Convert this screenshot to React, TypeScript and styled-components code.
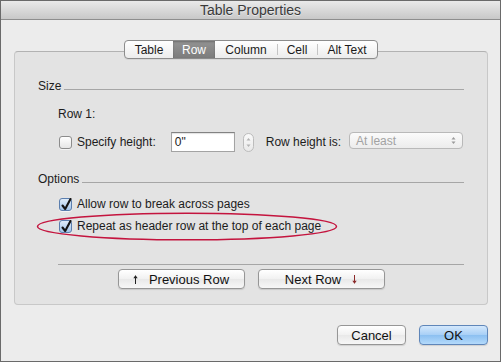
import React from "react";
import styled, { createGlobalStyle } from "styled-components";

const Global = createGlobalStyle`
  html, body { margin: 0; padding: 0; background: #ececec; }
  body {
    font-family: "Liberation Sans", Arial, sans-serif;
    font-size: 12px;
    color: #1c1c1c;
  }
  * { box-sizing: border-box; }
`;

const Window = styled.div`
  width: 501px;
  height: 362px;
  display: flex;
  flex-direction: column;
  background: #ececec;
  border: 1px solid #6a6a6a;
`;

const TitleBar = styled.div`
  height: 19px;
  flex: none;
  display: flex;
  align-items: center;
  justify-content: center;
  background: linear-gradient(#eaeaea, #c8c8c8);
  border-bottom: 1px solid #8e8e8e;
  font-size: 14px;
  color: #3a3a3a;
  text-shadow: 0 1px 0 rgba(255, 255, 255, 0.55);
`;

const Body = styled.div`
  padding: 31px 12px 0 13px;
  display: flex;
  flex-direction: column;
`;

const Panel = styled.div`
  background: #e3e3e3;
  border: 1px solid #c8c8c8;
  border-top-color: #b2b2b2;
  border-radius: 4px;
  padding: 0 23px 15px 23px;
  display: flex;
  flex-direction: column;
`;

const TabBar = styled.div`
  align-self: center;
  margin-top: -12px;
  margin-bottom: 20px;
  height: 19px;
  display: flex;
  border: 1px solid #8c8c8c;
  border-radius: 4px;
  overflow: hidden;
  background: linear-gradient(#ffffff, #ececec);
  box-shadow: 0 1px 0 rgba(0, 0, 0, 0.06);
`;

const Tab = styled.div<{ $w: number; $selected?: boolean; $divider?: boolean }>`
  position: relative;
  width: ${(p) => p.$w}px;
  display: flex;
  align-items: center;
  justify-content: center;
  font-size: 12px;
  color: ${(p) => (p.$selected ? "#ffffff" : "#1a1a1a")};
  background: ${(p) => (p.$selected ? "linear-gradient(#939393, #7c7c7c)" : "transparent")};
  box-shadow: ${(p) => (p.$selected ? "inset 0 1px 2px rgba(0,0,0,0.25)" : "none")};
  ${(p) =>
    p.$divider
      ? `&::before {
    content: "";
    position: absolute;
    left: 0;
    top: 3px;
    height: 11px;
    width: 1px;
    background: #c4c4c4;
  }`
      : ""}
`;

const SectionHeader = styled.div<{ $gap?: number }>`
  display: flex;
  height: 14px;
  line-height: 14px;
  margin-top: ${(p) => p.$gap ?? 0}px;
`;

const Rule = styled.div`
  flex: 1;
  height: 1px;
  background: #a6a6a6;
  align-self: flex-end;
  margin: 0 0 3px 3px;
`;

const Indented = styled.div`
  margin-left: 20px;
  display: flex;
  flex-direction: column;
`;

const PlainLabel = styled.div<{ $gap?: number }>`
  height: 14px;
  line-height: 14px;
  margin-top: ${(p) => p.$gap ?? 0}px;
`;

const FieldRow = styled.div<{ $gap?: number }>`
  display: flex;
  align-items: center;
  height: 20px;
  margin-top: ${(p) => p.$gap ?? 0}px;
`;

const CheckRow = styled.div<{ $gap?: number }>`
  position: relative;
  display: flex;
  align-items: center;
  height: 16px;
  margin-top: ${(p) => p.$gap ?? 0}px;
`;

const Box = styled.div<{ $checked?: boolean }>`
  position: relative;
  width: 13px;
  height: 13px;
  flex: none;
  margin: 0 5px 0 1px;
  border-radius: 3px;
  border: 1px solid ${(p) => (p.$checked ? "#5b7eae" : "#8c8c8c")};
  background: ${(p) =>
    p.$checked ? "linear-gradient(#dfecf9, #a2c4ea)" : "linear-gradient(#ffffff, #e6e6e6)"};
  box-shadow: 0 1px 0 rgba(255, 255, 255, 0.6);
  svg {
    position: absolute;
    left: 0;
    top: -3px;
    overflow: visible;
  }
`;

const TextInput = styled.div`
  width: 64px;
  height: 20px;
  margin-left: 15px;
  background: #fff;
  border: 1px solid #a3a3a3;
  border-top-color: #828282;
  box-shadow: inset 0 1px 1px rgba(0, 0, 0, 0.12);
  padding-left: 3px;
  display: flex;
  align-items: center;
  font-size: 12px;
`;

const Stepper = styled.div`
  width: 11px;
  height: 19px;
  margin-left: 8px;
  border: 1px solid #bcbcbc;
  border-radius: 6px;
  background: linear-gradient(#fafafa, #e9e9e9);
  display: flex;
  align-items: center;
  justify-content: center;
`;

const InlineLabel = styled.div<{ $gap?: number }>`
  margin-left: ${(p) => p.$gap ?? 0}px;
  white-space: nowrap;
`;

const Select = styled.div`
  width: 114px;
  height: 17px;
  margin-left: 8px;
  align-self: flex-start;
  border: 1px solid #b9b9b9;
  border-radius: 4px;
  background: linear-gradient(#fbfbfb, #ececec);
  display: flex;
  align-items: center;
  justify-content: space-between;
  padding: 0 6px 0 6px;
  color: #a2a2a2;
  font-size: 12px;
`;

const Ellipse = styled.svg`
  position: absolute;
  left: -22px;
  top: -6px;
  pointer-events: none;
`;

const Separator = styled.div`
  height: 1px;
  background: #a6a6a6;
  margin: 30px 0 0 20px;
`;

const ButtonRow = styled.div<{ $gap?: number; $justify?: string }>`
  display: flex;
  justify-content: ${(p) => p.$justify ?? "center"};
  gap: 13px;
  margin-top: ${(p) => p.$gap ?? 0}px;
`;

const PushButton = styled.div<{ $w: number; $default?: boolean }>`
  width: ${(p) => p.$w}px;
  height: 20px;
  display: flex;
  align-items: center;
  justify-content: center;
  gap: 11px;
  font-size: 13px;
  color: #111;
  border-radius: 4px;
  border: 1px solid ${(p) => (p.$default ? "#5f86b9" : "#969696")};
  background: ${(p) =>
    p.$default
      ? "linear-gradient(#d4e8fc 0%, #a9d0f6 48%, #8cc0f1 52%, #b4dafb 100%)"
      : "linear-gradient(#ffffff, #f1f1f1 50%, #e9e9e9 52%, #f7f7f7)"};
  box-shadow: 0 1px 1px rgba(0, 0, 0, 0.12);
`;

const Footer = styled(ButtonRow)`
  margin-top: 20px;
`;

const Check = ({ checked }: { checked?: boolean }) => (
  <Box $checked={checked}>
    {checked && (
      <svg width="13" height="16" viewBox="0 0 13 16">
        <path d="M2.5 9.5 L5.2 13 L10.5 3" fill="none" stroke="#141414" strokeWidth="2.1" strokeLinecap="round" strokeLinejoin="round" />
      </svg>
    )}
  </Box>
);

const Arrow = ({ down, color }: { down?: boolean; color: string }) => (
  <svg width="5" height="9" viewBox="0 0 5 9" style={{ transform: down ? "scaleY(-1)" : undefined }}>
    <path d="M2.5 0.8 V9" stroke={color} strokeWidth="1" fill="none" />
    <path d="M0.3 3.2 L2.5 0.3 L4.7 3.2 Z" fill={color} />
  </svg>
);

const tabs = [
  { label: "Table", w: 48 },
  { label: "Row", w: 42, selected: true },
  { label: "Column", w: 62 },
  { label: "Cell", w: 40, divider: true },
  { label: "Alt Text", w: 60, divider: true },
];

export default function App() {
  return (
    <>
      <Global />
      <Window>
        <TitleBar>Table Properties</TitleBar>
        <Body>
          <Panel>
            <TabBar>
              {tabs.map((t) => (
                <Tab key={t.label} $w={t.w} $selected={t.selected} $divider={t.divider}>
                  {t.label}
                </Tab>
              ))}
            </TabBar>

            <SectionHeader>
              Size
              <Rule />
            </SectionHeader>
            <Indented>
              <PlainLabel $gap={14}>Row 1:</PlainLabel>
              <FieldRow $gap={11}>
                <Check />
                <InlineLabel>Specify height:</InlineLabel>
                <TextInput>0"</TextInput>
                <Stepper>
                  <svg width="5" height="11" viewBox="0 0 5 11">
                    <path d="M0.5 3.5 L2.5 1 L4.5 3.5 Z" fill="#b4b4b4" />
                    <path d="M0.5 7.5 L2.5 10 L4.5 7.5 Z" fill="#b4b4b4" />
                  </svg>
                </Stepper>
                <InlineLabel $gap={12}>Row height is:</InlineLabel>
                <Select>
                  <span>At least</span>
                  <svg width="5" height="9" viewBox="0 0 5 9">
                    <path d="M0.5 3.5 L2.5 1 L4.5 3.5 Z" fill="#9a9a9a" />
                    <path d="M0.5 5.5 L2.5 8 L4.5 5.5 Z" fill="#9a9a9a" />
                  </svg>
                </Select>
              </FieldRow>
            </Indented>

            <SectionHeader $gap={20}>
              Options
              <Rule />
            </SectionHeader>
            <Indented>
              <CheckRow $gap={10}>
                <Check checked />
                <InlineLabel>Allow row to break across pages</InlineLabel>
              </CheckRow>
              <CheckRow $gap={6}>
                <Check checked />
                <InlineLabel>Repeat as header row at the top of each page</InlineLabel>
                <Ellipse width="302" height="30" viewBox="0 0 302 30">
                  <ellipse cx="151" cy="14.5" rx="149.5" ry="13.3" fill="none" stroke="#c4143e" strokeWidth="1.5" />
                </Ellipse>
              </CheckRow>
            </Indented>

            <Separator />
            <ButtonRow $gap={4}>
              <PushButton $w={127}>
                <Arrow color="#222" />
                <span>Previous Row</span>
              </PushButton>
              <PushButton $w={127}>
                <span>Next Row</span>
                <Arrow down color="#8b2a2a" />
              </PushButton>
            </ButtonRow>
          </Panel>

          <Footer $justify="flex-end">
            <PushButton $w={69}>Cancel</PushButton>
            <PushButton $w={69} $default>
              OK
            </PushButton>
          </Footer>
        </Body>
      </Window>
    </>
  );
}
